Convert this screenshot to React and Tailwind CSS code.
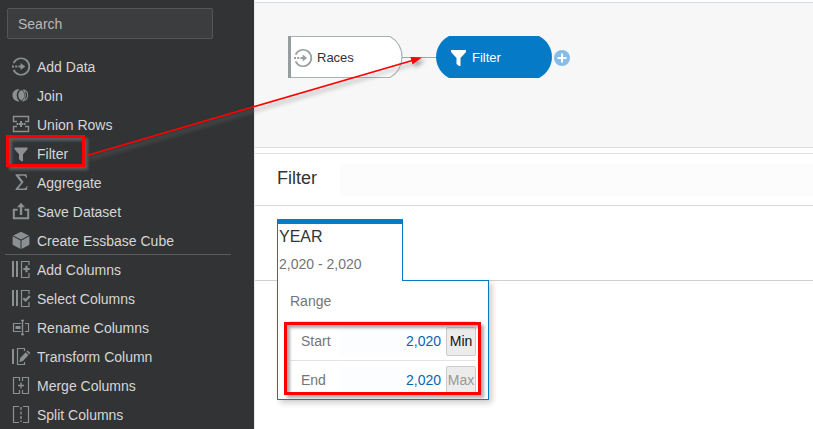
import React from "react";

function Icon({ children }) {
  return (
    <svg
      className="size-5 shrink-0 text-[#8b9093]"
      viewBox="0 0 20 20"
      fill="none"
      stroke="currentColor"
      strokeWidth="1.2"
      aria-hidden="true"
    >
      {children}
    </svg>
  );
}

function AddDataShape() {
  return (
    <>
      <path d="M2.6 6.2A8.2 8.2 0 1 1 2.6 12.8" strokeWidth="1.7" />
      <path d="M1 9.5h2M4.2 9.5h2M7.4 9.5h3.2" strokeWidth="2" />
      <path d="M9.6 5.9L14.2 9.5L9.6 13.1Z" fill="currentColor" stroke="none" />
    </>
  );
}

const icons = {
  add: <AddDataShape />,
  join: (
    <>
      <path d="M8.6 3.3A6.1 6.1 0 1 0 8.6 15.3A7.6 7.6 0 0 1 8.6 3.3Z" fill="currentColor" stroke="none" />
      <path d="M10.3 4A6.1 6.1 0 0 1 10.3 14.6A6.1 6.1 0 0 1 10.3 4Z" fill="currentColor" stroke="none" />
      <path d="M12.2 3.9A5.5 5.5 0 0 1 12.2 14.7A8 8 0 0 0 12.2 3.9" strokeWidth="1.1" />
    </>
  ),
  union: (
    <>
      <path d="M6 6.5H2.5V1.5H17.5V6.5H14M6 11.5H2.5V16.5H17.5V11.5H14" strokeWidth="1.4" />
      <path d="M10 6v6" strokeWidth="2" />
      <path d="M5.5 9h1.5M7.5 9h5M13 9h1.5" strokeWidth="2" />
    </>
  ),
  filter: <path d="M3.5 3.5h13v1.8L12 10.2v7h-1.6L8 15.2v-5L3.5 5.3Z" fill="currentColor" stroke="none" />,
  sigma: (
    <path
      d="M4.5 1.3H15.5L16 5H15C14.6 3.2 14 2.8 12.5 2.8H7.8L12.6 9L7.3 15.4H13C14.6 15.4 15.2 14.8 15.8 13H16.6L15.8 17H4.5V16L10 9.5L4.5 2.3Z"
      fill="currentColor"
      stroke="none"
    />
  ),
  save: (
    <>
      <path d="M6.5 7.8H2.8V16.3H17.2V7.8H13.5" strokeWidth="2" />
      <path d="M10 13V4" strokeWidth="2.4" />
      <path d="M6 5.2L10 0.8L14 5.2Z" fill="currentColor" stroke="none" />
    </>
  ),
  cube: (
    <g fill="currentColor" stroke="none">
      <path d="M10 0.8L17.8 4.4L10 8.5L2.2 4.4Z" />
      <path d="M1.6 5.2L9.5 9.4V18L1.6 13.8Z" />
      <path d="M18.4 5.2L10.5 9.4V18L18.4 13.8Z" />
    </g>
  ),
  addColumns: (
    <>
      <path d="M2 1v16M6 1v16" strokeWidth="2" />
      <path d="M18 5V1.5H10.5V17.5H18V13" />
      <path d="M15.5 5.8v6.4M12.3 9h6.4" strokeWidth="2.2" />
    </>
  ),
  selectColumns: (
    <>
      <path d="M2 1v16M6 1v16" strokeWidth="2" />
      <path d="M18 5V1.5H10.5V17.5H18V13" />
      <path d="M12.3 9.2L14.6 11.4L18.8 7" strokeWidth="2.2" />
    </>
  ),
  rename: (
    <>
      <path d="M10 5.5H2.5V13.5H10M14 5.5H17.5V13.5H14" />
      <path d="M4.5 9.5H9.5" strokeWidth="3" />
      <path d="M11.5 2.5V16.5M10 2.5h3M10 16.5h3" strokeWidth="1.4" />
    </>
  ),
  transform: (
    <>
      <path d="M2 2v15" strokeWidth="2" />
      <path d="M13.5 4V1.5H6.5V17.5H13.5V15" />
      <path d="M8.3 15L9.3 11L14.7 5.3L17.5 8L12 13.9Z" fill="currentColor" stroke="none" />
      <path d="M15.4 4.6L16.6 3.4L19.4 6L18.2 7.3Z" fill="currentColor" stroke="none" />
    </>
  ),
  merge: (
    <>
      <path d="M8.5 5V1.5H2.5V17.5H8.5V14M11.5 5V1.5H17.5V17.5H11.5V14" />
      <path d="M10 6.5v6M7 9.5h6" strokeWidth="1.4" />
    </>
  ),
  split: (
    <>
      <path d="M8 1.5H2.5V17.5H8M12 1.5H17.5V17.5H12" />
      <path d="M10 2v15" strokeDasharray="3 1.5" strokeWidth="1.4" />
    </>
  ),
};

const dataSteps = [
  ["add", "Add Data"],
  ["join", "Join"],
  ["union", "Union Rows"],
  ["filter", "Filter"],
  ["sigma", "Aggregate"],
  ["save", "Save Dataset"],
  ["cube", "Create Essbase Cube"],
];

const columnSteps = [
  ["addColumns", "Add Columns"],
  ["selectColumns", "Select Columns"],
  ["rename", "Rename Columns"],
  ["transform", "Transform Column"],
  ["merge", "Merge Columns"],
  ["split", "Split Columns"],
];

const callout =
  "pointer-events-none absolute border-3 border-[#fe0000] shadow-[3px_3px_3px_rgba(120,120,120,0.6),inset_3px_3px_3px_rgba(120,120,120,0.6)]";

function StepList({ steps }) {
  return (
    <ul className="flex flex-col gap-[3px]">
      {steps.map(([icon, label]) => (
        <li key={label} className="relative">
          <button type="button" className="flex h-[26px] w-full items-center gap-1.5 pl-[11px] text-left">
            <Icon>{icons[icon]}</Icon>
            <span>{label}</span>
          </button>
          {icon === "filter" && <span className={`${callout} -top-1.5 left-1.5 h-8 w-[79px]`} />}
        </li>
      ))}
    </ul>
  );
}

function Sidebar() {
  return (
    <aside className="w-[254px] shrink-0 bg-[#323334] pt-2 text-[#d6d6d6]">
      <input
        type="search"
        aria-label="Search"
        placeholder="Search"
        className="ml-[7px] block h-[31px] w-[206px] rounded-xs border border-[#555657] bg-[#3c3d3e] px-2.5 placeholder:text-[#b9b9b9]"
      />
      <nav className="pt-[15px]">
        <StepList steps={dataSteps} />
        <hr className="mr-[23px] mb-0.5 ml-[5px] border-[#5b5c5d]" />
        <StepList steps={columnSteps} />
      </nav>
    </aside>
  );
}

function FlowCanvas() {
  return (
    <section className="relative mt-0.5 h-[146px] border-y border-t-[#d3dde5] border-b-[#dcdcdc] bg-[#f7f7f7] text-[13px]">
      <svg className="absolute top-0 left-0 h-[144px] w-[320px]" viewBox="0 0 320 144" fill="none" aria-hidden="true">
        <path d="M147 54.5H182" stroke="#a0a8ab" />
        <path d="M34 33.5H135A23.5 23.5 0 0 1 135 74.5H34Z" fill="#fff" stroke="#a9b0b3" strokeWidth="1.2" />
        <path d="M33 33H36V75H33Z" fill="#959d9f" />
        <path d="M194 33H284A23.5 23.5 0 0 1 284 75H194A23.5 23.5 0 0 1 194 33Z" fill="#057ac7" />
      </svg>
      <button type="button" className="absolute top-[34px] left-[33px] flex h-[42px] w-[115px] items-center gap-1 pl-[5px] text-[#333]">
        <svg className="size-5 text-[#9a9fa2]" viewBox="0 0 20 19" fill="none" stroke="currentColor" aria-hidden="true">
          <AddDataShape />
        </svg>
        <span>Races</span>
      </button>
      <button type="button" className="absolute top-[34px] left-[181px] flex h-[42px] w-[117px] items-center gap-1.5 pl-[15px] text-white">
        <svg className="h-4 w-[15px]" viewBox="0 0 15 16" aria-hidden="true">
          <path d="M0 0H15V2L9.5 8V16H8L5.5 14V8L0 2Z" fill="currentColor" />
        </svg>
        <span>Filter</span>
      </button>
      <button type="button" aria-label="Add step" className="absolute top-[47px] left-[299px] size-4 rounded-full bg-[#86bce9]">
        <svg viewBox="0 0 16 16" stroke="#fff" strokeWidth="2" aria-hidden="true">
          <path d="M8 3.5v9M3.5 8h9" />
        </svg>
      </button>
    </section>
  );
}

function RangeRow({ id, label, action, actionClass }) {
  return (
    <div className="flex h-[39px] items-center border-t border-[#e3e3e3] pl-[11px]">
      <label htmlFor={id} className="w-[39px]">
        {label}
      </label>
      <input
        id={id}
        type="text"
        defaultValue="2,020"
        className="mr-[5px] h-7 min-w-0 flex-1 bg-[#fbfdff] text-right text-[#0b65ab]"
      />
      <button type="button" className={`h-[29px] w-[30px] rounded-xs border border-[#cbcbcb] bg-[#ececec] ${actionClass}`}>
        {action}
      </button>
    </div>
  );
}

function FilterPanel() {
  return (
    <section className="mt-[5px] border-t border-[#e0e0e0]">
      <header className="flex h-[52px] items-center border-b border-[#d8d8d8] pl-[22px]">
        <h1 className="w-[63px] pb-1 text-lg text-[#333]">Filter</h1>
        <div className="h-8 flex-1 bg-[#fcfcfc]" />
      </header>
      <div className="pt-[13px]">
        <div className="flex border-b border-[#cfcfcf] pl-[22px]">
          <div className="relative z-10 -mb-px h-[62px] w-[126px] border-x border-t-5 border-[#057ac7] bg-white pl-px">
            <h2 className="pt-px text-base leading-6 text-[#333]">YEAR</h2>
            <p className="pt-[5px] text-[#757575]">2,020 - 2,020</p>
          </div>
        </div>
        <div className="relative -mt-px ml-[22px] h-[120px] w-[212px] border border-[#057ac7] bg-white px-3 text-[#757575] shadow-[3px_3px_6px_rgba(0,0,0,0.2)]">
          <h3 className="flex h-10 items-center">Range</h3>
          <RangeRow id="range-start" label="Start" action="Min" actionClass="text-[#111]" />
          <RangeRow id="range-end" label="End" action="Max" actionClass="text-[#999]" />
          <span className={`${callout} top-[41px] left-1.5 h-[73px] w-[197px]`} />
        </div>
      </div>
    </section>
  );
}

export default function App() {
  return (
    <div className="relative flex min-h-screen overflow-hidden bg-white font-['Liberation_Sans',Arial,sans-serif] text-sm">
      <Sidebar />
      <main className="min-w-0 flex-1 border-l border-[#e4eaee]">
        <FlowCanvas />
        <FilterPanel />
      </main>
      <svg
        className="pointer-events-none absolute top-0 left-0 z-20 h-[180px] w-[440px] drop-shadow-[3px_3px_2px_rgba(120,120,120,0.7)]"
        viewBox="0 0 440 180"
        aria-hidden="true"
      >
        <path d="M87 155.5L414 60" stroke="#fe0000" strokeWidth="1.7" />
        <path d="M422 57.5L412.5 64.5L410.5 57Z" fill="#fe0000" />
      </svg>
    </div>
  );
}
